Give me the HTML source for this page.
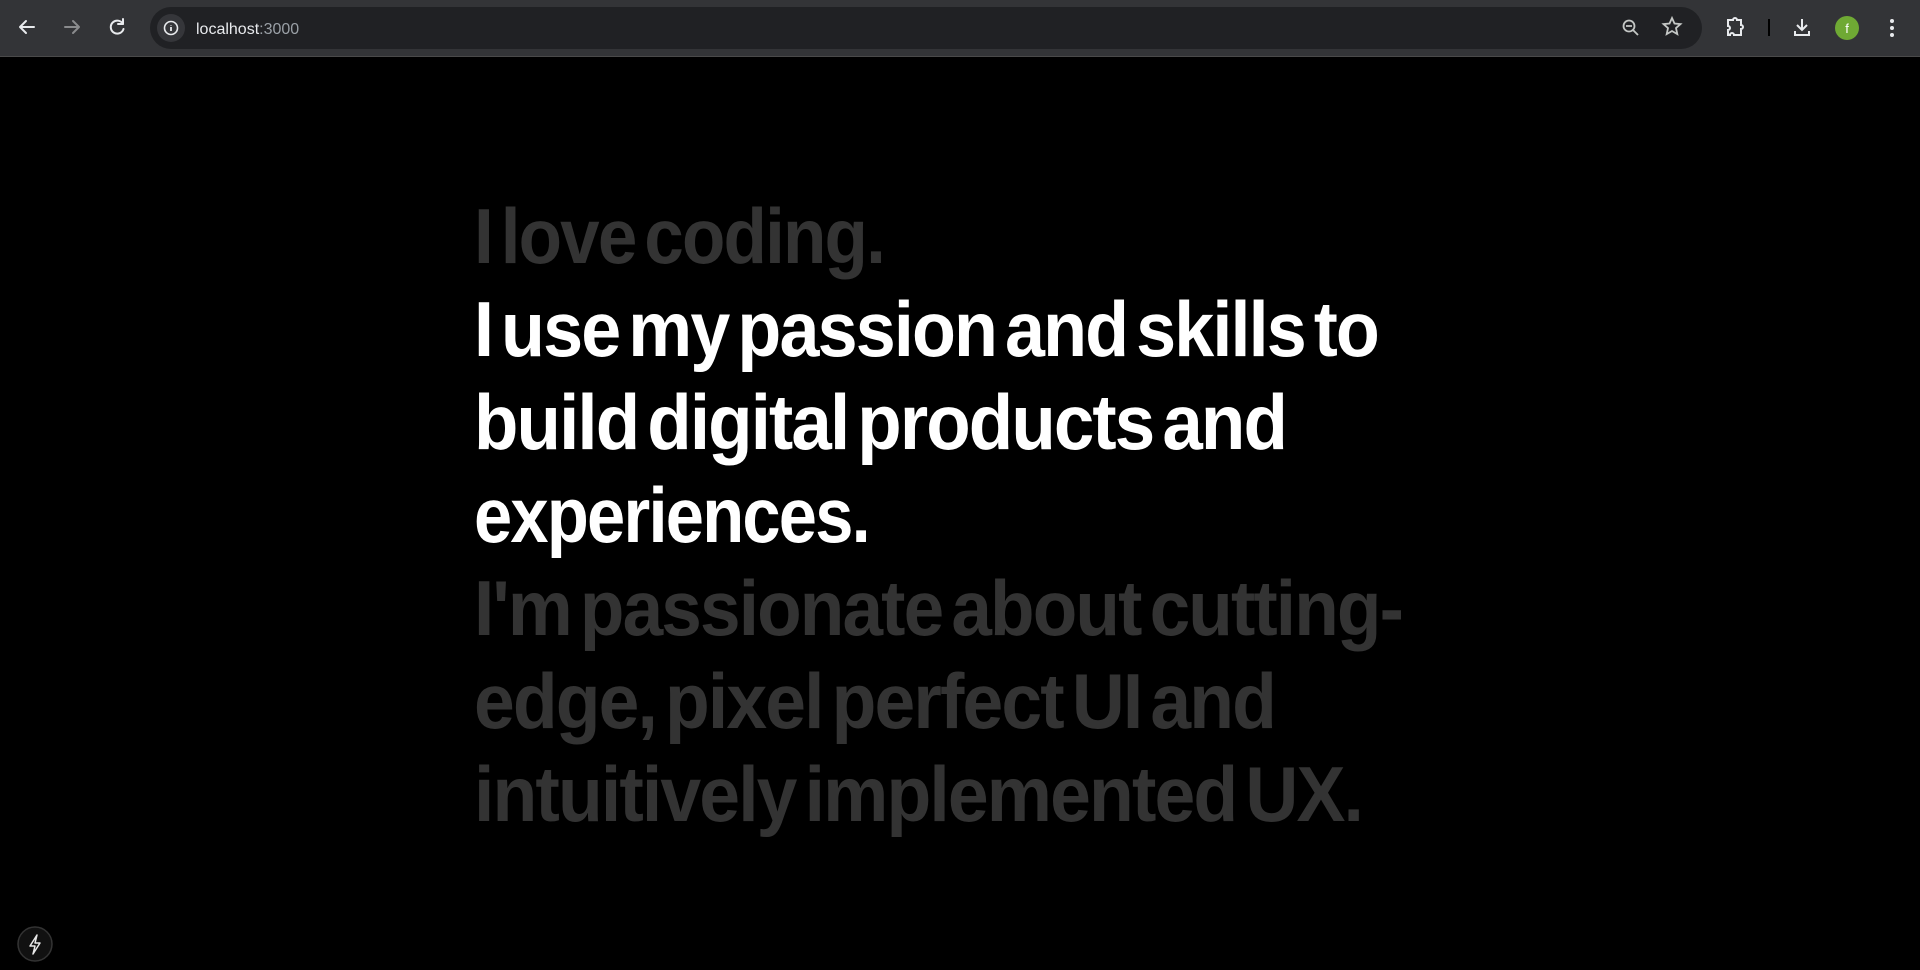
<!DOCTYPE html>
<html><head><meta charset="utf-8"><style>
html,body{margin:0;padding:0;background:#000;width:1920px;height:970px;overflow:hidden;font-family:"Liberation Sans",sans-serif}
.bar{position:absolute;left:0;top:0;width:1920px;height:56px;background:#333437;border-bottom:1px solid #4a4a4a}
.omni{position:absolute;left:150px;top:7px;width:1552px;height:42px;border-radius:21px;background:#202124}
.ic{position:absolute}
</style></head><body>
<div class="bar">
<svg class="ic" style="left:0;top:0" width="1920" height="56">
 <g stroke="#e8eaed" stroke-width="2" fill="none" stroke-linecap="round" stroke-linejoin="round">
  <path d="M34 27H20M26 21l-6 6 6 6"/>
  <path d="M65 27h14M73 21l6 6-6 6" stroke="#8a8b8d"/>
  <path d="M123 24a6.5 6.5 0 1 0 0.5 5"/><path d="M123 19v5h-5"/>
 </g>
</svg>
<div class="omni"></div>
<svg class="ic" style="left:0;top:0" width="1920" height="56">
 <circle cx="171" cy="28" r="14" fill="#35363a"/>
 <circle cx="171" cy="28" r="6.5" fill="none" stroke="#e8eaed" stroke-width="1.6"/>
 <path d="M171 27v4M171 25v0.5" stroke="#e8eaed" stroke-width="1.8"/>
 <text x="196" y="34" font-size="16" fill="#e8eaed" font-family="Liberation Sans">localhost<tspan fill="#9aa0a6">:3000</tspan></text>
 <g stroke="#c4c7c5" stroke-width="1.8" fill="none">
  <circle cx="1629" cy="26" r="5.5"/><path d="M1633 30l5 5M1626 26h6"/>
  <path d="M1672 18l2.5 5.5 6 .6-4.5 4 1.3 6-5.3-3.1-5.3 3.1 1.3-6-4.5-4 6-.6z"/>
 </g>
 <g stroke="#e8eaed" stroke-width="2" fill="none">
  <path d="M1728 20h5a2 2 0 0 1 4 0h4v5a2 2 0 0 1 0 4v6h-7a2 2 0 0 0-4 0h-2v-5a2 2 0 0 0 0-4z"/>
  <path d="M1769 19v17" stroke="#000"/>
  <path d="M1802 19v11M1797 25l5 5 5-5M1795 31v4h14v-4"/>
 </g>
 <circle cx="1847" cy="28" r="12" fill="#6fa934"/>
 <text x="1847" y="33" font-size="13" fill="#fff" text-anchor="middle">f</text>
 <g fill="#e8eaed"><circle cx="1892" cy="21" r="2"/><circle cx="1892" cy="28" r="2"/><circle cx="1892" cy="35" r="2"/></g>
</svg>
</div>
<svg style="position:absolute;left:0;top:0" width="1920" height="970" font-family="Liberation Sans" font-weight="bold" font-size="78" letter-spacing="-2" word-spacing="-10">
 <g fill="#333333">
  <text x="474" y="263" textLength="410" lengthAdjust="spacingAndGlyphs">I love coding.</text>
 </g>
 <g fill="#ffffff">
  <text x="474" y="356" textLength="904" lengthAdjust="spacingAndGlyphs">I use my passion and skills to</text>
  <text x="474" y="449" textLength="812" lengthAdjust="spacingAndGlyphs">build digital products and</text>
  <text x="474" y="542" textLength="395" lengthAdjust="spacingAndGlyphs">experiences.</text>
 </g>
 <g fill="#333333">
  <text x="474" y="635" textLength="928" lengthAdjust="spacingAndGlyphs">I'm passionate about cutting-</text>
  <text x="474" y="728" textLength="801" lengthAdjust="spacingAndGlyphs">edge, pixel perfect UI and</text>
  <text x="474" y="821" textLength="888" lengthAdjust="spacingAndGlyphs">intuitively implemented UX.</text>
 </g>
 <circle cx="35" cy="944" r="17" fill="#111" stroke="#333" stroke-width="1.5"/>
 <path d="M37 935l-7 11h5l-2 8 7-11h-5z" fill="none" stroke="#e8e8e8" stroke-width="1.5" stroke-linejoin="round"/>
</svg>
</body></html>
